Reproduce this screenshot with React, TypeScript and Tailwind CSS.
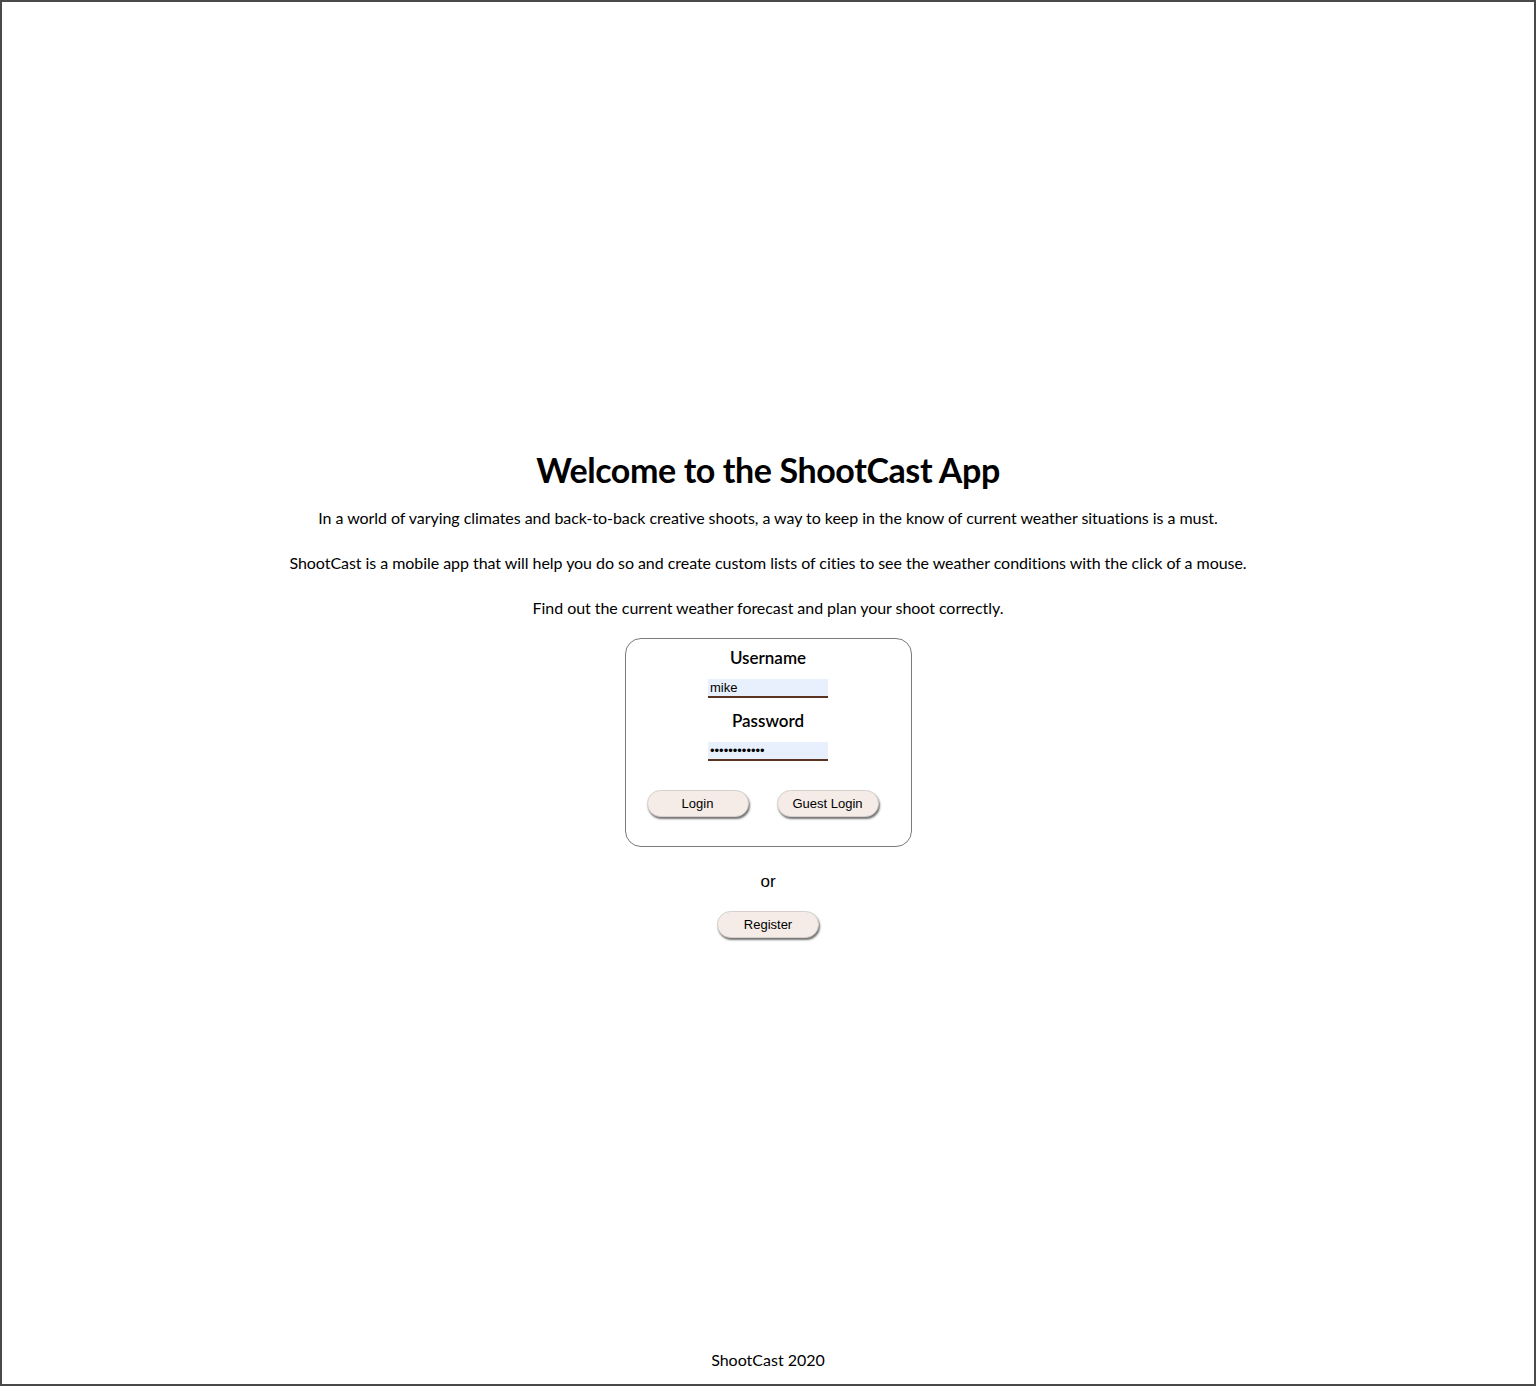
import { useState } from "react";

const sans = "font-['Source_Sans_Pro','Lato','Noto_Sans',sans-serif]";

function PillButton({ label }: { label: string }) {
  return (
    <button
      type="button"
      className="w-[102px] h-[27px] rounded-full bg-[#f5ece8] border border-[#d6cfcb] shadow-[1px_2px_2px_rgba(0,0,0,0.55)] text-[13px] text-black font-['Liberation_Sans',Arial,sans-serif]"
    >
      {label}
    </button>
  );
}

function App() {
  const [username, setUsername] = useState("mike");
  const [password, setPassword] = useState("password1234");

  return (
    <div className={`min-h-screen flex flex-col border-2 border-[#4a4a4a] bg-white text-black ${sans}`}>
      <main className="flex-1 flex flex-col items-center pt-[448px]">
        <h1 className="text-[34px] font-bold leading-[40px] tracking-[-0.4px]">
          Welcome to the ShootCast App
        </h1>
        <div className="mt-[15px] flex flex-col items-center gap-[20px] text-[16px] leading-[25px] tracking-[-0.05px]">
          <p>
            In a world of varying climates and back-to-back creative shoots, a way to keep in the know of current weather situations is a must.
          </p>
          <p>
            ShootCast is a mobile app that will help you do so and create custom lists of cities to see the weather conditions with the click of a mouse.
          </p>
          <p>Find out the current weather forecast and plan your shoot correctly.</p>
        </div>

        {/* Login card */}
        <form
          onSubmit={(e) => e.preventDefault()}
          className="mt-[18px] w-[287px] h-[209px] border border-[#7a7a7a] rounded-[16px] flex flex-col items-center pt-[7px]"
        >
          <label className="text-[17px] font-semibold leading-[24px]">Username</label>
          <input
            value={username}
            onChange={(e) => setUsername(e.target.value)}
            className="mt-[9px] w-[120px] h-[19px] bg-[#e8f0fe] border-b-2 border-[#5b3421] px-[2px] text-[13px] leading-[17px] outline-none font-['Liberation_Sans',Arial,sans-serif]"
          />
          <label className="mt-[11px] text-[17px] font-semibold leading-[24px]">Password</label>
          <input
            type="password"
            value={password}
            onChange={(e) => setPassword(e.target.value)}
            className="mt-[9px] w-[120px] h-[19px] bg-[#e8f0fe] border-b-2 border-[#5b3421] px-[2px] text-[13px] leading-[17px] outline-none font-['Liberation_Sans',Arial,sans-serif]"
          />
          <div className="mt-[29px] pr-[11px] flex gap-[28px]">
            <PillButton label="Login" />
            <PillButton label="Guest Login" />
          </div>
        </form>

        <p className="mt-[22px] text-[17px] font-['Liberation_Sans',Arial,sans-serif]">or</p>
        <div className="mt-[16px]">
          <PillButton label="Register" />
        </div>
      </main>

      <footer className="pb-[12px] text-center text-[16px] leading-[24px]">ShootCast 2020</footer>
    </div>
  );
}

export default App;
